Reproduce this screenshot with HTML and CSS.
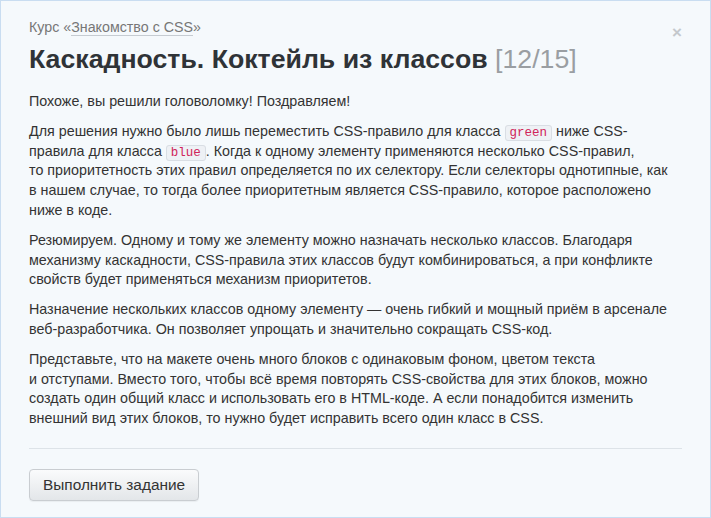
FILE: index.html
```html
<!DOCTYPE html>
<html lang="ru">
<head>
<meta charset="utf-8">
<title>Каскадность. Коктейль из классов</title>
<link rel="stylesheet" href="styles.css">
</head>
<body>
<div class="modal">
  <button class="close" type="button">×</button>
  <div class="course">Курс «<a class="course-link" href="#">Знакомство с CSS</a>»</div>
  <h1 class="title">Каскадность. Коктейль из классов <span class="counter">[12/15]</span></h1>
  <div class="text">
    <p>Похоже, вы решили головоломку! Поздравляем!</p>
    <p>Для решения нужно было лишь переместить CSS-правило для класса <code>green</code> ниже CSS-<br>правила для класса <code>blue</code>. Когда к&nbsp;одному элементу применяются несколько CSS-правил,<br>то&nbsp;приоритетность этих правил определяется по&nbsp;их селектору. Если селекторы однотипные, как<br>в&nbsp;нашем случае, то тогда более приоритетным является CSS-правило, которое расположено<br>ниже в&nbsp;коде.</p>
    <p>Резюмируем. Одному и тому же элементу можно назначать несколько классов. Благодаря<br>механизму каскадности, CSS-правила этих классов будут комбинироваться, а при конфликте<br>свойств будет применяться механизм приоритетов.</p>
    <p>Назначение нескольких классов одному элементу — очень гибкий и мощный приём в&nbsp;арсенале<br>веб-разработчика. Он позволяет упрощать и значительно сокращать CSS-код.</p>
    <p>Представьте, что на макете очень много блоков с одинаковым фоном, цветом текста<br>и&nbsp;отступами. Вместо того, чтобы всё время повторять CSS-свойства для этих блоков, можно<br>создать один общий класс и использовать его в HTML-коде. А если понадобится изменить<br>внешний вид этих блоков, то нужно будет исправить всего один класс в CSS.</p>
  </div>
  <div class="footer">
    <button class="btn" type="button">Выполнить задание</button>
  </div>
</div>
</body>
</html>
```
FILE: styles.css
```css
html, body {
  margin: 0;
  padding: 0;
  height: 100%;
}
body {
  font-family: "Liberation Sans", Arial, sans-serif;
  font-size: 14.3px;
  line-height: 19.8px;
  color: #333;
  background: #f5f9fc;
}
.modal {
  position: relative;
  box-sizing: border-box;
  height: 100vh;
  border: 1px solid #c9ddf1;
  background: #f5f9fc;
  padding: 16px 28px 0 28px;
}
.close {
  position: absolute;
  top: 22px;
  right: 28px;
  padding: 0;
  border: 0;
  background: none;
  font-family: "Liberation Sans", Arial, sans-serif;
  font-size: 17px;
  font-weight: bold;
  line-height: 20px;
  color: #c4c8cc;
  cursor: pointer;
}
.course {
  color: #777;
  font-size: 14.25px;
  line-height: 20px;
}
.course-link {
  color: #777;
  text-decoration: none;
  border-bottom: 1px solid #c6ccd2;
}
.title {
  margin: 6px 0 17px;
  font-size: 26.7px;
  line-height: 32px;
  font-weight: bold;
  color: #2f3337;
}
.counter {
  font-weight: normal;
  color: #9a9ea2;
}
.text p {
  margin: 0 0 10px;
}
.text p:last-child {
  margin-bottom: 0;
}
code {
  font-family: "Liberation Mono", monospace;
  font-size: 12.5px;
  line-height: 12px;
  color: #d0245a;
  background: #eef1f5;
  border: 1px solid #d9dee4;
  border-radius: 3px;
  padding: 0 4px;
}
.footer {
  margin-top: 19px;
  border-top: 1px solid #dde3e8;
  padding-top: 20px;
}
.btn {
  font-family: "Liberation Sans", Arial, sans-serif;
  font-size: 15.4px;
  line-height: 20px;
  color: #333;
  padding: 5px 13px;
  border: 1px solid #c9cdd1;
  border-radius: 4px;
  background: linear-gradient(#fafbfc, #e3e6e9);
  box-shadow: 0 1px 1px rgba(0,0,0,0.05);
  cursor: pointer;
}
```
